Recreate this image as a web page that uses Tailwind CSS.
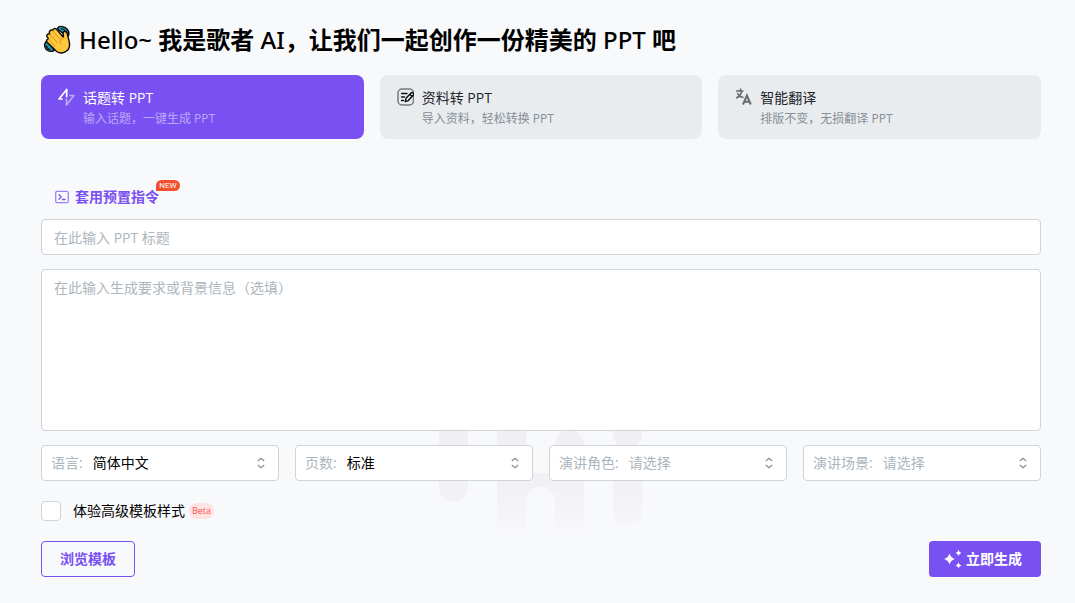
<!doctype html>
<html lang="zh-CN">

<head>
  <meta charset="UTF-8" />
  <meta name="viewport" content="width=device-width, initial-scale=1.0" />
  <title>歌者 AI</title>
  <script src="https://cdn.jsdelivr.net/npm/@tailwindcss/browser@4"></script>
</head>

<body class="min-h-screen bg-[#f8f9fb] font-['Open_Sans','Noto_Sans_CJK_SC',sans-serif] text-sm text-black">
  <main class="relative isolate pt-5 pb-6 pl-[41px] pr-[34px]">
    <!-- 背景水印 -->
    <svg class="absolute left-[439px] top-[425px] -z-10" width="204" height="125" viewBox="0 0 204 125" aria-hidden="true">
      <defs>
        <linearGradient id="fade" x1="0" y1="0" x2="0" y2="115" gradientUnits="userSpaceOnUse">
          <stop offset="0" stop-color="#f0eff4" />
          <stop offset="0.5" stop-color="#f1f0f4" />
          <stop offset="1" stop-color="#f8f9fb" />
        </linearGradient>
      </defs>
      <path fill="url(#fade)" d="M0 0H29V62.500a14.500 14.500 0 0 1-29 0Z" />
      <path fill="url(#fade)" d="M58 0H87V34a14.500 14.500 0 0 0 14.500 14.500H116V19.500a14.500 14.500 0 0 1 29 0V125H116V76.500a14.500 14.500 0 0 0-29 0V125H58Z" />
      <path fill="url(#fade)" d="M174 0H203V9a14.500 14.500 0 0 1-29 0ZM174 48a14.500 14.500 0 0 1 29 0V87a14.500 14.500 0 0 1-29 0Z" />
    </svg>

    <!-- 标题 -->
    <h1 class="flex h-10 items-center gap-2 text-2xl font-bold">
      <svg width="30" height="30" viewBox="-2 1 36 36" aria-hidden="true">
        <g stroke="#0a0a0a" stroke-width="1.700" stroke-linejoin="round" stroke-linecap="round">
          <path fill="#2499b8" d="M18 4.500C20 1.500 28 2 31 8.500c1 3 .5 5-1 6.500L19 7Z" />
          <path fill="#2499b8" d="M4 21c-3 3-2 9 3 11 3 1 6 .5 7-1L6 21Z" />
          <path fill="#ffc83d" d="M5 21.500c-1-1.500 0-3.500 2-4L5.500 15.500c-1.500-2 .5-4.500 3-4C7 9 9.500 6 12 7.500 12.500 5 15.500 4.500 17 6.500l8 9.500-.5-5c-.2-3 4-3.500 4.700-.5l2.300 9c2 7-.5 12-5 14-4.500 2-9.500.5-12.500-3.500Z" />
        </g>
        <path d="m12 8 9 10M8.500 12l9 10M6.500 17.500l8 9M25 16c-4 2-5 5-3 8" fill="none" stroke="#d99216" stroke-width="1.200" stroke-linecap="round" />
        <path d="M22 5.500c3 0 5 2 6 4.500M4.500 26c.5 2.500 2 4 4.500 4.500" fill="none" stroke="#0a0a0a" stroke-width="1.300" stroke-linecap="round" />
      </svg>
      <span class="font-['Noto_Sans','Noto_Sans_CJK_SC',sans-serif]"><span class="font-medium">Hello~</span> 我是歌者 <span class="font-medium">AI</span>，让我们一起创作一份精美的 <span class="font-medium">PPT</span> 吧</span>
    </h1>

    <!-- 功能切换 -->
    <nav class="mt-[15px] grid grid-cols-3 gap-4">
      <button class="flex h-16 items-start gap-2 rounded-lg bg-[#7950f2] px-4 pt-3 text-left text-white">
        <svg class="mt-px" width="18" height="18" viewBox="0 0 18 18" fill="none" stroke="currentColor" stroke-width="1.700" stroke-linejoin="round" stroke-linecap="round" aria-hidden="true">
          <path d="M5 11H2L9.700 1.500V8.500" />
          <path d="M13 7.500H17L9.500 17V11" opacity=".5" />
        </svg>
        <span class="flex flex-col">
          <span class="leading-[22px]">话题转 PPT</span>
          <span class="text-xs leading-5 text-white/50">输入话题，一键生成 PPT</span>
        </span>
      </button>
      <button class="flex h-16 items-start gap-2 rounded-lg bg-[#e9ecef] px-4 pt-3 text-left text-[#212529]">
        <svg class="mt-px" width="18" height="18" viewBox="-1 0 18 18" fill="none" stroke-linejoin="round" stroke-linecap="round" aria-hidden="true">
          <rect x="1" y="1" width="15.500" height="16" rx="4" stroke="#777a7d" stroke-width="1.500" />
          <path d="M4.500 5.500H10M4.500 9H7.500M4.500 12.500H6.500" stroke="#111" stroke-width="1.300" />
          <path d="M8.300 13.500 9 10.300 14 5a1.500 1.500 0 0 1 2.200 2.200L11.300 12.600ZM12.800 6.300l2.100 2.100" fill="#e9ecef" stroke="#111" stroke-width="1.500" />
        </svg>
        <span class="flex flex-col">
          <span class="leading-[22px]">资料转 PPT</span>
          <span class="text-xs leading-5 text-[#868e96]">导入资料，轻松转换 PPT</span>
        </span>
      </button>
      <button class="flex h-16 items-start gap-2 rounded-lg bg-[#e9ecef] px-4 pt-3 text-left text-[#212529]">
        <svg class="mt-px" width="18" height="18" viewBox="0 0 18 18" fill="none" stroke="#666a6d" stroke-width="1.600" aria-hidden="true">
          <path d="M2 3H9.500M6.500 .5V3M7.800 3C7 6.500 5 9 2 10M3.500 5C4.500 8 6 9.300 9.500 9.500" />
          <path d="M9 16.500 12.900 7.500 16.800 16.500M10.300 13.800H15.500" stroke-width="1.900" />
        </svg>
        <span class="flex flex-col">
          <span class="leading-[22px]">智能翻译</span>
          <span class="text-xs leading-5 text-[#868e96]">排版不变，无损翻译 PPT</span>
        </span>
      </button>
    </nav>

    <!-- 表单 -->
    <form class="mt-12">
      <button type="button" class="relative ml-[14px] flex h-5 items-center gap-1.5 font-bold text-[#7950f2]">
        <svg width="14" height="14" viewBox="0 0 14 14" fill="none" stroke="currentColor" stroke-width="1.300" stroke-linejoin="round" stroke-linecap="round" aria-hidden="true">
          <rect x="0.700" y="1.300" width="12.600" height="11.400" rx="1.500" opacity=".7" />
          <path d="M4 4.800 6.200 7 4 9.200M7.500 9.500H10" />
        </svg>
        套用预置指令
        <span class="absolute -top-[7px] left-[101px] flex h-[11px] w-6 items-center justify-center rounded-t-full rounded-br-full bg-[#f0502e] font-['Roboto',sans-serif] text-[8px] font-normal text-white">NEW</span>
      </button>
      <input type="text" aria-label="PPT 标题" placeholder="在此输入 PPT 标题" class="mt-3 block h-9 w-full rounded border border-[#ced4da] bg-white px-3 placeholder:text-[#adb5bd]" />
      <textarea aria-label="生成要求或背景信息" placeholder="在此输入生成要求或背景信息（选填）" class="mt-3.5 block h-[162px] w-full resize-none rounded border border-[#ced4da] bg-white px-3 py-2 leading-5 placeholder:text-[#adb5bd]"></textarea>

      <div class="mt-3.5 grid grid-cols-4 gap-4">
        <div class="relative flex h-9 items-center gap-2.5 rounded border border-[#ced4da] bg-white pl-[9px]">
          <label for="language" class="text-[#adb5bd]">语言:</label>
          <select id="language" class="h-full min-w-0 flex-1 appearance-none">
            <option>简体中文</option>
          </select>
          <svg class="pointer-events-none absolute right-3 top-[11px]" width="10" height="12" viewBox="0 0 10 12" fill="none" stroke="#868e96" stroke-width="1.200" aria-hidden="true"><path d="M1.800 4 5 1.200 8.200 4M1.800 8 5 10.800 8.200 8" /></svg>
        </div>
        <div class="relative flex h-9 items-center gap-2.5 rounded border border-[#ced4da] bg-white pl-[9px]">
          <label for="pages" class="text-[#adb5bd]">页数:</label>
          <select id="pages" class="h-full min-w-0 flex-1 appearance-none">
            <option>标准</option>
          </select>
          <svg class="pointer-events-none absolute right-3 top-[11px]" width="10" height="12" viewBox="0 0 10 12" fill="none" stroke="#868e96" stroke-width="1.200" aria-hidden="true"><path d="M1.800 4 5 1.200 8.200 4M1.800 8 5 10.800 8.200 8" /></svg>
        </div>
        <div class="relative flex h-9 items-center gap-2.5 rounded border border-[#ced4da] bg-white pl-[9px]">
          <label for="role" class="text-[#adb5bd]">演讲角色:</label>
          <select id="role" class="h-full min-w-0 flex-1 appearance-none text-[#adb5bd]">
            <option>请选择</option>
          </select>
          <svg class="pointer-events-none absolute right-3 top-[11px]" width="10" height="12" viewBox="0 0 10 12" fill="none" stroke="#868e96" stroke-width="1.200" aria-hidden="true"><path d="M1.800 4 5 1.200 8.200 4M1.800 8 5 10.800 8.200 8" /></svg>
        </div>
        <div class="relative flex h-9 items-center gap-2.5 rounded border border-[#ced4da] bg-white pl-[9px]">
          <label for="scene" class="text-[#adb5bd]">演讲场景:</label>
          <select id="scene" class="h-full min-w-0 flex-1 appearance-none text-[#adb5bd]">
            <option>请选择</option>
          </select>
          <svg class="pointer-events-none absolute right-3 top-[11px]" width="10" height="12" viewBox="0 0 10 12" fill="none" stroke="#868e96" stroke-width="1.200" aria-hidden="true"><path d="M1.800 4 5 1.200 8.200 4M1.800 8 5 10.800 8.200 8" /></svg>
        </div>
      </div>

      <div class="mt-5 flex h-5 items-center">
        <input id="premium" type="checkbox" class="size-5 appearance-none rounded border border-[#ced4da] bg-white checked:bg-[#7950f2]" />
        <label for="premium" class="flex items-center gap-1 pl-3">体验高级模板样式
          <span class="flex h-4 items-center rounded-full bg-[#ffe3e3] px-[3px] text-[9px] text-[#fa5252]">Beta</span>
        </label>
      </div>

      <div class="mt-5 flex justify-between">
        <button type="button" class="h-9 rounded border border-[#7950f2] px-[18px] font-bold text-[#7950f2]">浏览模板</button>
        <button type="submit" class="flex h-9 items-center gap-1 rounded bg-[#7950f2] pl-[15px] pr-[19px] font-bold text-white">
          <svg width="18" height="18" viewBox="0 0 18 18" fill="currentColor" aria-hidden="true">
            <path d="M5.500 3.500Q6.800 7.700 11 9 6.800 10.300 5.500 14.500 4.200 10.300 0 9 4.200 7.700 5.500 3.500ZM14.500 0Q15.200 2.300 17.500 3 15.200 3.700 14.500 6 13.800 3.700 11.500 3 13.800 2.300 14.500 0ZM14.500 12.500Q15.200 14.800 17.500 15.500 15.200 16.200 14.500 18 13.800 16.200 11.500 15.500 13.800 14.800 14.500 12.500Z" />
          </svg>
          立即生成
        </button>
      </div>
    </form>
  </main>
</body>

</html>
